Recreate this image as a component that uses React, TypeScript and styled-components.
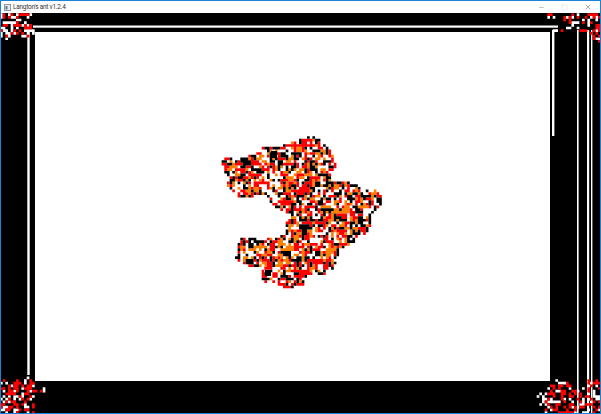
import { useMemo } from 'react';
import styled, { createGlobalStyle } from 'styled-components';
import { Minus, Square, X } from 'lucide-react';

const GlobalStyle = createGlobalStyle`
  html, body {
    margin: 0;
    padding: 0;
    background: #ffffff;
    overflow: hidden;
  }
`;

const Window = styled.div`
  width: 601px;
  height: 414px;
  box-sizing: border-box;
  display: flex;
  flex-direction: column;
  border: 1px solid #1883d7;
  background: #000000;
`;

const TitleBar = styled.div`
  height: 12px;
  flex: none;
  display: flex;
  align-items: center;
  background: #ffffff;
  padding-left: 3px;
  font-family: Roboto, 'Liberation Sans', sans-serif;
  font-size: 6.4px;
  letter-spacing: -0.2px;
  color: #333333;
`;

const AppIcon = styled.svg`
  width: 7px;
  height: 7px;
  margin-right: 2px;
`;

const Title = styled.span`
  flex: 1;
  white-space: nowrap;
`;

const Controls = styled.div`
  display: flex;
  height: 100%;
`;

const ControlButton = styled.div<{ $tone: string }>`
  width: 23.5px;
  display: flex;
  align-items: center;
  justify-content: center;
  color: ${(p) => p.$tone};
`;

const World = styled.svg`
  flex: 1;
  display: block;
  width: 599px;
  height: 400px;
`;

type Pt = [number, number];
type Tone = 'black' | 'red' | 'orange' | 'clear';

const CELL = 2.67;

const BLOB: Pt[] = [
  [222, 160], [230, 156], [235, 161], [248, 156], [260, 152], [263, 147], [285, 145], [300, 140],
  [307, 137], [312, 132], [317, 139], [323, 142], [332, 152], [337, 167], [331, 172], [331, 180],
  [358, 184], [362, 192], [375, 189], [383, 198], [381, 205], [377, 208], [371, 215], [369, 233],
  [357, 237], [355, 241], [341, 250], [333, 268], [324, 274], [304, 277], [303, 286], [287, 288],
  [273, 283], [261, 281], [261, 268], [250, 266], [236, 259], [239, 243], [242, 236], [263, 240],
  [283, 236], [287, 222], [292, 215], [280, 210], [273, 205], [265, 193], [255, 196], [240, 198],
  [235, 193], [227, 187], [229, 178], [224, 170],
];

const TOP_LEFT: Pt[] = [
  [0, 15], [8, 13], [32, 13], [30, 22], [36, 30], [30, 38], [22, 36], [12, 34], [6, 45], [0, 42],
];
const TOP_RIGHT_A: Pt[] = [[544, 13], [556, 13], [556, 18], [548, 18]];
const TOP_RIGHT_B: Pt[] = [
  [565, 13], [601, 13], [601, 44], [596, 42], [590, 33], [576, 30], [560, 33], [551, 32], [560, 26],
];
const BOTTOM_LEFT: Pt[] = [
  [3, 375], [8, 385], [26, 375], [36, 382], [46, 390], [34, 400], [34, 414], [0, 414], [0, 385],
];
const BOTTOM_RIGHT: Pt[] = [
  [537, 395], [548, 385], [556, 380], [572, 384], [590, 380], [601, 372], [601, 414], [546, 414],
  [540, 408],
];

const inside = (x: number, y: number, poly: Pt[]) => {
  let hit = false;
  for (let i = 0, j = poly.length - 1; i < poly.length; j = i++) {
    const [xi, yi] = poly[i];
    const [xj, yj] = poly[j];
    if (yi > y !== yj > y && x < ((xj - xi) * (y - yi)) / (yj - yi) + xi) hit = !hit;
  }
  return hit;
};

const makeRandom = (seed: number) => () => {
  seed = (seed * 1664525 + 1013904223) >>> 0;
  return seed / 4294967296;
};

const cell = (col: number, row: number) =>
  `M${(col * CELL).toFixed(2)} ${(row * CELL).toFixed(2)}h${CELL}v${CELL}h-${CELL}z`;

const bounds = (poly: Pt[]) => {
  const xs = poly.map((p) => p[0]);
  const ys = poly.map((p) => p[1]);
  return {
    colMin: Math.floor(Math.min(...xs) / CELL),
    colMax: Math.ceil(Math.max(...xs) / CELL),
    rowMin: Math.floor(Math.min(...ys) / CELL),
    rowMax: Math.ceil(Math.max(...ys) / CELL),
  };
};

// the ant's trail: main blob has four colours, the wrapped corners only red and white
const buildTrail = () => {
  const rand = makeRandom(20240);
  const paths = { black: '', red: '', orange: '', white: '' };
  const grid = new Map<string, Tone>();

  const { colMin, colMax, rowMin, rowMax } = bounds(BLOB);
  const isIn = (c: number, r: number) => inside((c + 0.5) * CELL, (r + 0.5) * CELL, BLOB);

  for (let r = rowMin; r <= rowMax; r++) {
    for (let c = colMin; c <= colMax; c++) {
      if (!isIn(c, r)) continue;
      const edge = !isIn(c - 1, r) || !isIn(c + 1, r) || !isIn(c, r - 1) || !isIn(c, r + 1);
      const v = rand();
      let tone: Tone;
      if (edge) {
        if (v < 0.15) continue;
        tone = v < 0.55 ? 'black' : v < 0.92 ? 'red' : 'orange';
      } else if (rand() < 0.2) {
        // trails run in short strokes, so copy a neighbour now and then
        tone = grid.get(rand() < 0.5 ? `${c - 1},${r}` : `${c},${r - 1}`) ?? 'red';
      } else {
        tone = v < 0.25 ? 'black' : v < 0.52 ? 'red' : v < 0.74 ? 'orange' : 'clear';
      }
      grid.set(`${c},${r}`, tone);
      if (tone !== 'clear') paths[tone] += cell(c, r);
    }
  }

  const corners: [Pt[], number, number][] = [
    [TOP_LEFT, 0.34, 0.24],
    [TOP_RIGHT_A, 0.4, 0.08],
    [TOP_RIGHT_B, 0.24, 0.16],
    [BOTTOM_LEFT, 0.32, 0.2],
    [BOTTOM_RIGHT, 0.28, 0.2],
  ];
  corners.forEach(([poly, red, white]) => {
    const box = bounds(poly);
    for (let r = box.rowMin; r <= box.rowMax; r++) {
      for (let c = box.colMin; c <= box.colMax; c++) {
        if (!inside((c + 0.5) * CELL, (r + 0.5) * CELL, poly)) continue;
        const v = rand();
        if (v < red) paths.red += cell(c, r);
        else if (v < red + white) paths.white += cell(c, r);
      }
    }
  });

  return paths;
};

const App = () => {
  const trail = useMemo(buildTrail, []);

  return (
    <>
      <GlobalStyle />
      <Window>
        <TitleBar>
          <AppIcon viewBox="0 0 7 7">
            <rect x="0.5" y="0.5" width="6" height="6" fill="#e6ebee" stroke="#8b9aa6" />
            <rect x="1.5" y="2" width="2" height="3.5" fill="#5f7d92" />
          </AppIcon>
          <Title>Langton's ant v1.2.4</Title>
          <Controls>
            <ControlButton $tone="#777777">
              <Minus size={7} strokeWidth={1.4} />
            </ControlButton>
            <ControlButton $tone="#d6d6d6">
              <Square size={7} strokeWidth={1.4} />
            </ControlButton>
            <ControlButton $tone="#555555">
              <X size={8} strokeWidth={1.4} />
            </ControlButton>
          </Controls>
        </TitleBar>
        <World viewBox="1 13 599 400">
          <defs>
            <filter id="soft" x="0" y="0" width="1" height="1">
              <feGaussianBlur stdDeviation="0.3" />
            </filter>
          </defs>
          <g filter="url(#soft)">
            <rect x="1" y="13" width="599" height="400" fill="#000000" />
            <rect x="35" y="32" width="515" height="349" fill="#ffffff" />
            <rect x="33" y="25.5" width="525" height="2.2" fill="#ffffff" />
            <rect x="27.3" y="30" width="2.4" height="345" fill="#ffffff" />
            <rect x="552" y="30" width="2.4" height="106" fill="#ffffff" />
            <rect x="577" y="30" width="1.6" height="383" fill="#ffffff" />
            <rect x="587" y="30" width="2.2" height="383" fill="#ffffff" />
            <rect x="591" y="30" width="1.4" height="383" fill="#ffffff" />
            <path d={trail.white} fill="#ffffff" />
            <path d={trail.orange} fill="#ff8000" />
            <path d={trail.red} fill="#ff0000" />
            <path d={trail.black} fill="#000000" />
            <rect x="271" y="151" width="6" height="7" fill="#000000" />
            <rect x="265" y="270" width="6" height="6" fill="#000000" />
          </g>
        </World>
      </Window>
    </>
  );
};

export default App;
